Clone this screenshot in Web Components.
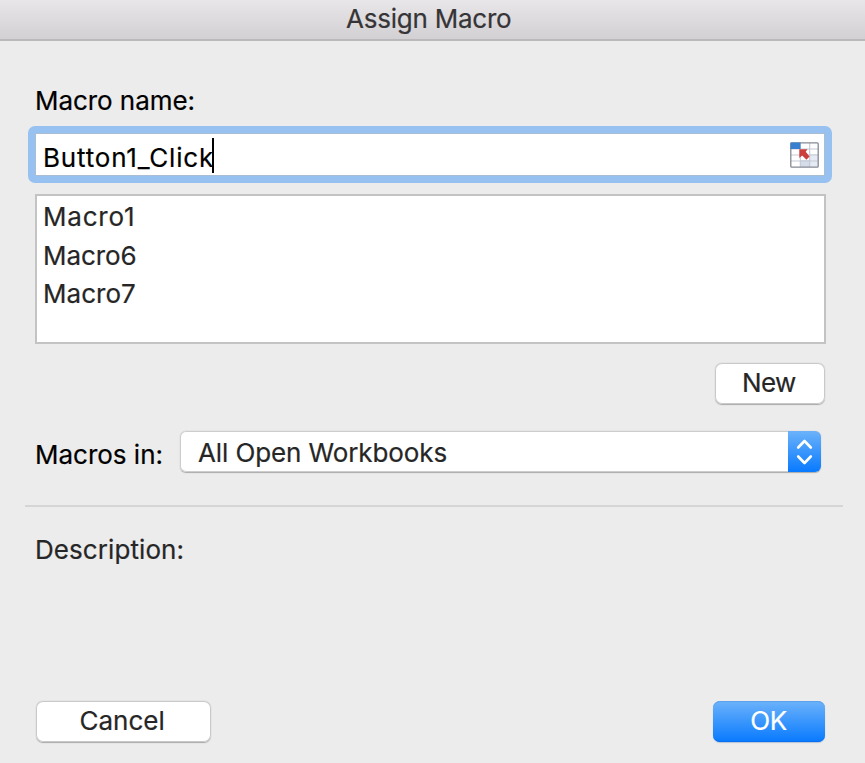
<!DOCTYPE html>
<html lang="en">
<head>
<meta charset="utf-8">
<title>Assign Macro</title>
<style>
  html, body { margin: 0; height: 100%; }
  body { background: #ececec; font-family: Inter, "Liberation Sans", sans-serif; overflow: hidden; color: #262626; }
</style>
</head>
<body>
<macro-dialog></macro-dialog>
<script>
/* One line of text whose visible glyphs span exactly `span` pixels. */
class UiText extends HTMLElement {
  connectedCallback() {
    const root = this.attachShadow({ mode: 'open' });
    root.innerHTML = `<style>
      :host { display: block; white-space: pre; font-size: 26px; line-height: 30px; height: 30px; font-kerning: normal; flex: none;
        -webkit-text-stroke: .2px currentColor; }
      span { display: block; }
    </style><span><slot></slot></span>`;
    const text = this.textContent;
    const span = parseFloat(this.getAttribute('span'));
    const ctx = document.createElement('canvas').getContext('2d');
    ctx.font = '26px Inter, "Liberation Sans", sans-serif';
    const m = ctx.measureText(text);
    const ink = m.actualBoundingBoxLeft + m.actualBoundingBoxRight;
    const line = root.querySelector('span');
    line.style.letterSpacing = ((span - ink) / (text.length - 1)).toFixed(3) + 'px';
    line.style.marginLeft = m.actualBoundingBoxLeft.toFixed(2) + 'px';
    this.style.width = span + 'px';
  }
}

class TitleBar extends HTMLElement {
  constructor() {
    super();
    this.attachShadow({ mode: 'open' }).innerHTML = `<style>
      :host { display: flex; justify-content: center; box-sizing: border-box; height: 41px; padding: 4px 8px 0 0;
        background: linear-gradient(#e8e6e8, #d2d0d2); border-bottom: 2px solid #bab8ba; color: #363436; }
    </style><slot></slot>`;
  }
}

class MacroField extends HTMLElement {
  constructor() {
    super();
    this.attachShadow({ mode: 'open' }).innerHTML = `<style>
      :host { display: block; box-sizing: border-box; width: 804px; height: 57px; padding: 7px; background: #96c1f1; border-radius: 7px; }
      .inner { display: flex; align-items: flex-start; box-sizing: border-box; height: 43px; background: #fff;
        border: 1px solid #a9bdd3; padding: 8px 5px 0 9px; color: #000; }
      slot { display: block; margin-top: 1px; }
      .caret { width: 2px; height: 35px; background: #000; margin: -4px 0 0 -1px; }
      svg { margin-left: auto; display: block; }
    </style>
    <div class="inner"><slot></slot><div class="caret"></div>
      <svg width="29" height="26" viewBox="0 0 29 26">
        <rect x=".8" y=".8" width="27.4" height="24.4" rx="1" fill="#fff"/>
        <path d="M10 18H20V25H10z" fill="#d5dcec"/><path d="M20 12H28V25H20z" fill="#e6eaf4"/>
        <path d="M1 7H28M1 13H28M1 19H28M10.3 1V25M19.7 1V25" stroke="#c5c9d3" stroke-width="1.1"/>
        <rect x=".8" y=".8" width="27.4" height="24.4" rx="1" fill="none" stroke="#858993" stroke-width="1.3"/>
        <path d="M.5 .5H10.5V7H.5z" fill="#397fcf"/>
        <path d="M9.3 7.2H17.5L15.7 9.8L19.6 14.6L16.4 17.8L12.2 13.5L9.3 16z" fill="#cb3f3d"/>
      </svg>
    </div>`;
  }
}

class MacroList extends HTMLElement {
  constructor() {
    super();
    this.attachShadow({ mode: 'open' }).innerHTML = `<style>
      :host { display: flex; flex-direction: column; gap: 8.5px; box-sizing: border-box; width: 791px; height: 150px;
        background: #fff; border: 2px solid #c3c3c3; padding: 6px 8px; }
    </style><slot></slot>`;
  }
}

class PushButton extends HTMLElement {
  constructor() {
    super();
    this.attachShadow({ mode: 'open' }).innerHTML = `<style>
      :host { display: flex; justify-content: center; box-sizing: border-box; height: 41px; padding-top: 5px;
        border-radius: 7px; background: #fff; flex: none;
        box-shadow: inset 0 0 0 1px #c9c9c9, 0 .5px 1px #aaa; }
      :host([primary]) { color: #fff; background: linear-gradient(#6cb2fa, #087aff);
        box-shadow: inset 0 1px 0 #5ba2ec, inset 0 -1px 0 #0870ee, 0 1px 1px #b5c4d8; }
    </style><slot></slot>`;
  }
}

class PopupSelect extends HTMLElement {
  constructor() {
    super();
    this.attachShadow({ mode: 'open' }).innerHTML = `<style>
      :host { display: flex; justify-content: space-between; box-sizing: border-box; width: 641px; height: 41px;
        border-radius: 6px; background: #fff; overflow: hidden; box-shadow: inset 0 0 0 1px #cdcdcd, 0 .5px 1px #aaa; }
      .text { padding: 7px 0 0 18px; }
      .arrows { width: 33px; background: linear-gradient(#6cb2fa, #087aff); }
      svg { display: block; }
    </style><div class="text"><slot></slot></div>
    <div class="arrows"><svg width="33" height="41" viewBox="0 0 33 41" fill="none" stroke="#fff" stroke-width="2.6" stroke-linecap="round" stroke-linejoin="round"><path d="M10.2 16.5L16.5 10L22.8 16.5M10.2 25.5L16.5 32L22.8 25.5"/></svg></div>`;
  }
}

class MacroDialog extends HTMLElement {
  constructor() {
    super();
    this.attachShadow({ mode: 'open' }).innerHTML = `<style>
      :host { display: flex; flex-direction: column; width: 865px; height: 763px; }
      .name { padding: 45px 0 10px 37px; color: #000; }
      macro-field { margin-left: 28px; }
      macro-list { margin: 11px 0 0 35px; }
      .new { display: flex; justify-content: flex-end; padding: 19px 40px 0 0; }
      .source { display: flex; padding: 27px 0 0 37px; gap: 18.5px; color: #000; }
      .source > ui-text { margin-top: 9px; }
      popup-select { color: #262626; }
      hr { border: 0; height: 2px; margin: 33px 22px 0 25px; background: #d5d5d5; }
      .description { padding: 28px 0 0 37px; }
      footer { display: flex; justify-content: space-between; margin-top: auto; padding: 0 40px 21px 36px; }
    </style>
    <title-bar><ui-text span="165">Assign Macro</ui-text></title-bar>
    <div class="name"><ui-text span="156.5">Macro name:</ui-text></div>
    <macro-field><ui-text span="168">Button1_Click</ui-text></macro-field>
    <macro-list><ui-text span="88">Macro1</ui-text><ui-text span="90.5">Macro6</ui-text><ui-text span="90">Macro7</ui-text></macro-list>
    <div class="new"><push-button style="width:110px"><ui-text span="52">New</ui-text></push-button></div>
    <div class="source"><ui-text span="124.5">Macros in:</ui-text><popup-select><ui-text span="248.5">All Open Workbooks</ui-text></popup-select></div>
    <hr>
    <div class="description"><ui-text span="145.5">Description:</ui-text></div>
    <footer><push-button style="width:175px"><ui-text span="83" style="margin-right:3px">Cancel</ui-text></push-button><push-button primary style="width:112px"><ui-text span="35.5">OK</ui-text></push-button></footer>`;
  }
}

customElements.define('ui-text', UiText);
customElements.define('title-bar', TitleBar);
customElements.define('macro-field', MacroField);
customElements.define('macro-list', MacroList);
customElements.define('push-button', PushButton);
customElements.define('popup-select', PopupSelect);
customElements.define('macro-dialog', MacroDialog);
</script>
</body>
</html>
